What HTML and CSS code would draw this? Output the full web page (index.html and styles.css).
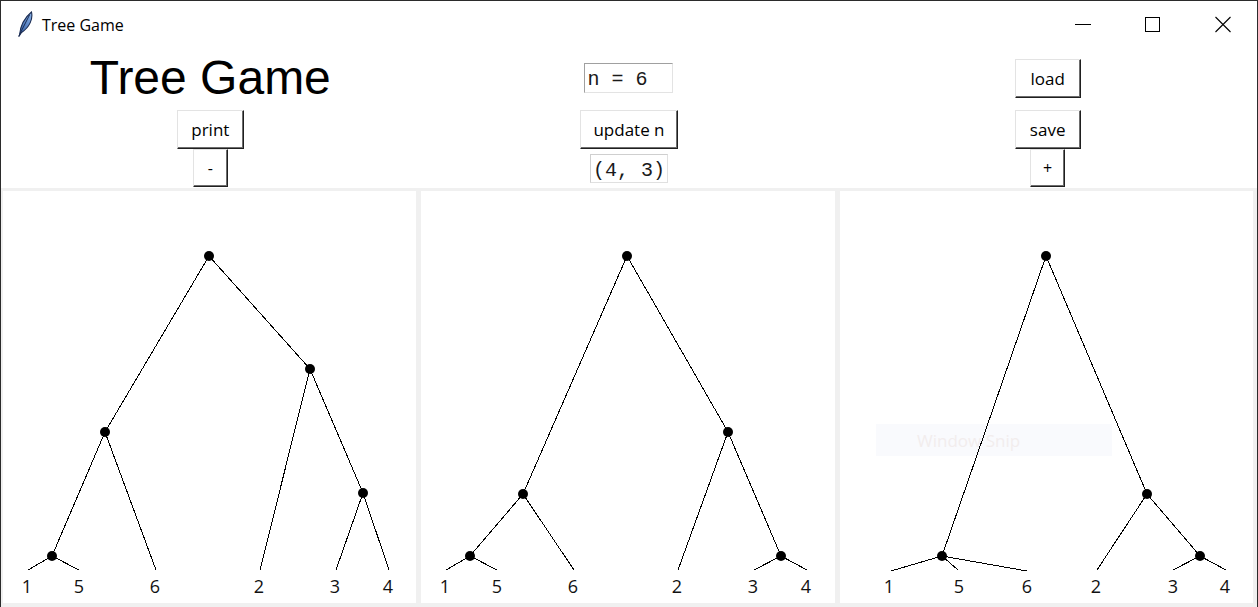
FILE: index.html
```html
<!DOCTYPE html>
<html lang="en">
<head>
<meta charset="utf-8">
<title>Tree Game</title>
<link rel="stylesheet" href="styles.css">
</head>
<body>
<div class="window">
  <header class="titlebar">
    <svg class="app-icon" viewBox="0 0 16 26" width="16" height="26">
      <defs>
        <linearGradient id="fe" x1="0" y1="1" x2="1" y2="0">
          <stop offset="0" stop-color="#2a57a0"/>
          <stop offset="1" stop-color="#8db5ea"/>
        </linearGradient>
      </defs>
      <path d="M2.5 24.5 C 3 17, 6 8, 14.5 1 C 16 7.5, 13 16, 4.5 21.5 Z" fill="url(#fe)" stroke="#1b2c52" stroke-width="1.1"/>
      <path d="M1.5 25.5 L 12.5 4" stroke="#1b2c52" stroke-width="1" fill="none"/>
    </svg>
    <span class="title">Tree Game</span>
    <div class="controls">
      <div class="ctrl ctrl-min">
        <svg width="16" height="17" viewBox="0 0 16 17"><line x1="0" y1="8.5" x2="16" y2="8.5" stroke="#000" stroke-width="1"/></svg>
      </div>
      <div class="ctrl ctrl-max">
        <svg width="16" height="17" viewBox="0 0 16 17"><rect x="0.5" y="1.5" width="14" height="14" fill="none" stroke="#000" stroke-width="1"/></svg>
      </div>
      <div class="ctrl ctrl-close">
        <svg width="16" height="17" viewBox="0 0 16 17"><path d="M0.5 1 L15.5 16 M15.5 1 L0.5 16" stroke="#000" stroke-width="1.1" fill="none"/></svg>
      </div>
    </div>
  </header>

  <section class="toolbar">
    <h1 class="heading">Tree Game</h1>
    <div class="entry">n = 6</div>
    <button class="btn btn-file btn-load">load</button>

    <button class="btn btn-print">print</button>
    <button class="btn btn-update">update n</button>
    <button class="btn btn-file btn-save">save</button>

    <button class="btn btn-step btn-minus">-</button>
    <div class="pair">(4, 3)</div>
    <button class="btn btn-step btn-plus">+</button>
  </section>

  <main class="boards">
    <div class="board">
      <svg class="tree">
        <g class="edges">
          <line x1="206" y1="65" x2="102" y2="241"/>
          <line x1="206" y1="65" x2="307" y2="178"/>
          <line x1="307" y1="178" x2="257" y2="379"/>
          <line x1="307" y1="178" x2="360" y2="302"/>
          <line x1="360" y1="302" x2="333" y2="379"/>
          <line x1="360" y1="302" x2="386" y2="379"/>
          <line x1="102" y1="241" x2="49" y2="365"/>
          <line x1="102" y1="241" x2="153" y2="379"/>
          <line x1="49" y1="365" x2="25" y2="379"/>
          <line x1="49" y1="365" x2="76" y2="379"/>
        </g>
        <g class="nodes">
          <circle cx="206" cy="65" r="5"/>
          <circle cx="307" cy="178" r="5"/>
          <circle cx="102" cy="241" r="5"/>
          <circle cx="360" cy="302" r="5"/>
          <circle cx="49" cy="365" r="5"/>
        </g>
        <g class="labels">
          <text x="24" y="402">1</text>
          <text x="76" y="402">5</text>
          <text x="152" y="402">6</text>
          <text x="256" y="402">2</text>
          <text x="332" y="402">3</text>
          <text x="385" y="402">4</text>
        </g>
      </svg>
    </div>

    <div class="board">
      <svg class="tree">
        <g class="edges">
          <line x1="206" y1="65" x2="102" y2="303"/>
          <line x1="206" y1="65" x2="307" y2="241"/>
          <line x1="307" y1="241" x2="257" y2="379"/>
          <line x1="307" y1="241" x2="360" y2="365"/>
          <line x1="360" y1="365" x2="333" y2="379"/>
          <line x1="360" y1="365" x2="386" y2="379"/>
          <line x1="102" y1="303" x2="49" y2="365"/>
          <line x1="102" y1="303" x2="153" y2="379"/>
          <line x1="49" y1="365" x2="25" y2="379"/>
          <line x1="49" y1="365" x2="76" y2="379"/>
        </g>
        <g class="nodes">
          <circle cx="206" cy="65" r="5"/>
          <circle cx="307" cy="241" r="5"/>
          <circle cx="102" cy="303" r="5"/>
          <circle cx="360" cy="365" r="5"/>
          <circle cx="49" cy="365" r="5"/>
        </g>
        <g class="labels">
          <text x="24" y="402">1</text>
          <text x="76" y="402">5</text>
          <text x="152" y="402">6</text>
          <text x="256" y="402">2</text>
          <text x="332" y="402">3</text>
          <text x="385" y="402">4</text>
        </g>
      </svg>
    </div>

    <div class="board">
      <svg class="tree">
        <rect class="snip-box" x="36" y="233" width="236" height="32"/>
        <text class="snip-text" x="77" y="256">Window Snip</text>
        <g class="edges">
          <line x1="206" y1="65" x2="102" y2="365"/>
          <line x1="206" y1="65" x2="307" y2="303"/>
          <line x1="307" y1="303" x2="257" y2="379"/>
          <line x1="307" y1="303" x2="360" y2="365"/>
          <line x1="360" y1="365" x2="333" y2="379"/>
          <line x1="360" y1="365" x2="386" y2="379"/>
          <line x1="102" y1="365" x2="51" y2="380"/>
          <line x1="102" y1="365" x2="118" y2="379"/>
          <line x1="102" y1="365" x2="187" y2="380"/>
        </g>
        <g class="nodes">
          <circle cx="206" cy="65" r="5"/>
          <circle cx="307" cy="303" r="5"/>
          <circle cx="360" cy="365" r="5"/>
          <circle cx="102" cy="365" r="5"/>
        </g>
        <g class="labels">
          <text x="49" y="402">1</text>
          <text x="119" y="402">5</text>
          <text x="187" y="402">6</text>
          <text x="256" y="402">2</text>
          <text x="333" y="402">3</text>
          <text x="385" y="402">4</text>
        </g>
      </svg>
    </div>
  </main>
</div>
</body>
</html>
```

FILE: styles.css
```css
html, body {
  margin: 0;
  padding: 0;
  background: #ffffff;
  font-family: "Open Sans", "Noto Sans", sans-serif;
}

.window {
  width: 1258px;
  height: 607px;
  box-sizing: border-box;
  border-top: 1px solid #2b2b2b;
  border-left: 1px solid #2b2b2b;
  border-right: 1px solid #2b2b2b;
  display: flex;
  flex-direction: column;
  overflow: hidden;
  background: #ffffff;
}

/* ---------- title bar ---------- */
.titlebar {
  flex: none;
  height: 44px;
  display: flex;
  align-items: center;
  background: #ffffff;
}

.app-icon {
  margin-left: 16px;
  margin-top: 2px;
  flex: none;
  display: block;
}

.title {
  margin-left: 9px;
  margin-top: 4px;
  font-size: 16px;
  color: #000000;
}

.controls {
  margin-left: auto;
  display: flex;
  align-self: stretch;
}

.ctrl {
  display: flex;
  align-items: center;
  justify-content: center;
}

.ctrl svg {
  display: block;
  margin-top: 2px;
}

.ctrl-min { width: 69px; }
.ctrl-max { width: 71px; }
.ctrl-close { width: 69px; }

/* ---------- toolbar ---------- */
.toolbar {
  flex: none;
  padding-top: 1px;
  display: grid;
  grid-template-columns: repeat(3, 1fr);
  grid-template-rows: 64px 39px 39px;
  justify-items: center;
  background: #ffffff;
}

.heading {
  margin: 0;
  align-self: center;
  font-family: "Liberation Sans", Arial, sans-serif;
  font-weight: normal;
  font-size: 48px;
  line-height: 48px;
  color: #000000;
}

.btn {
  box-sizing: border-box;
  height: 39px;
  padding: 0;
  margin: 0;
  background: #ffffff;
  border: 1px solid;
  border-color: #e3e3e3 #1f1f1f #1f1f1f #e3e3e3;
  box-shadow: inset -1px -1px 0 #6d6d6d;
  font-family: "Open Sans", "Noto Sans", sans-serif;
  font-size: 17px;
  color: #000000;
  display: flex;
  align-items: center;
  justify-content: center;
  align-self: start;
}

.btn-load { align-self: center; }
.btn-print { width: 67px; }
.btn-update { width: 98px; }
.btn-file { width: 66px; }
.btn-step {
  width: 35px;
  height: 38px;
  font-size: 16px;
}

.entry {
  align-self: center;
  box-sizing: border-box;
  width: 89px;
  height: 30px;
  padding: 4px 0 0 2px;
  border: 1px solid;
  border-color: #a0a0a0 #e3e3e3 #e3e3e3 #a0a0a0;
  font-family: "Liberation Mono", "Courier New", monospace;
  font-size: 20px;
  line-height: 24px;
  white-space: pre;
  color: #1a1a1a;
  background: #ffffff;
}

.pair {
  align-self: center;
  box-sizing: border-box;
  height: 29px;
  padding: 4px 2px 0 2px;
  border: 1px solid;
  border-color: #cfcfcf #e0e0e0 #e0e0e0 #cfcfcf;
  font-family: "Liberation Mono", "Courier New", monospace;
  font-size: 20px;
  line-height: 24px;
  white-space: pre;
  color: #1a1a1a;
}

/* ---------- boards ---------- */
.boards {
  flex: 1;
  display: flex;
  gap: 5px;
  padding: 3px 4px 4px 2px;
  background: #f0f0f0;
}

.board {
  flex: 1;
  background: #ffffff;
}

.tree {
  display: block;
  width: 100%;
  height: 100%;
  overflow: visible;
}

.edges line {
  stroke: #000000;
  stroke-width: 1;
  shape-rendering: crispEdges;
}

.nodes circle { fill: #000000; }

.labels text {
  font-family: "Open Sans", "Noto Sans", sans-serif;
  font-size: 18px;
  fill: #111111;
  text-anchor: middle;
}

.snip-box { fill: #f9fafd; }

.snip-text {
  font-family: "Open Sans", "Noto Sans", sans-serif;
  font-size: 17px;
  fill: #f2eded;
}
```
